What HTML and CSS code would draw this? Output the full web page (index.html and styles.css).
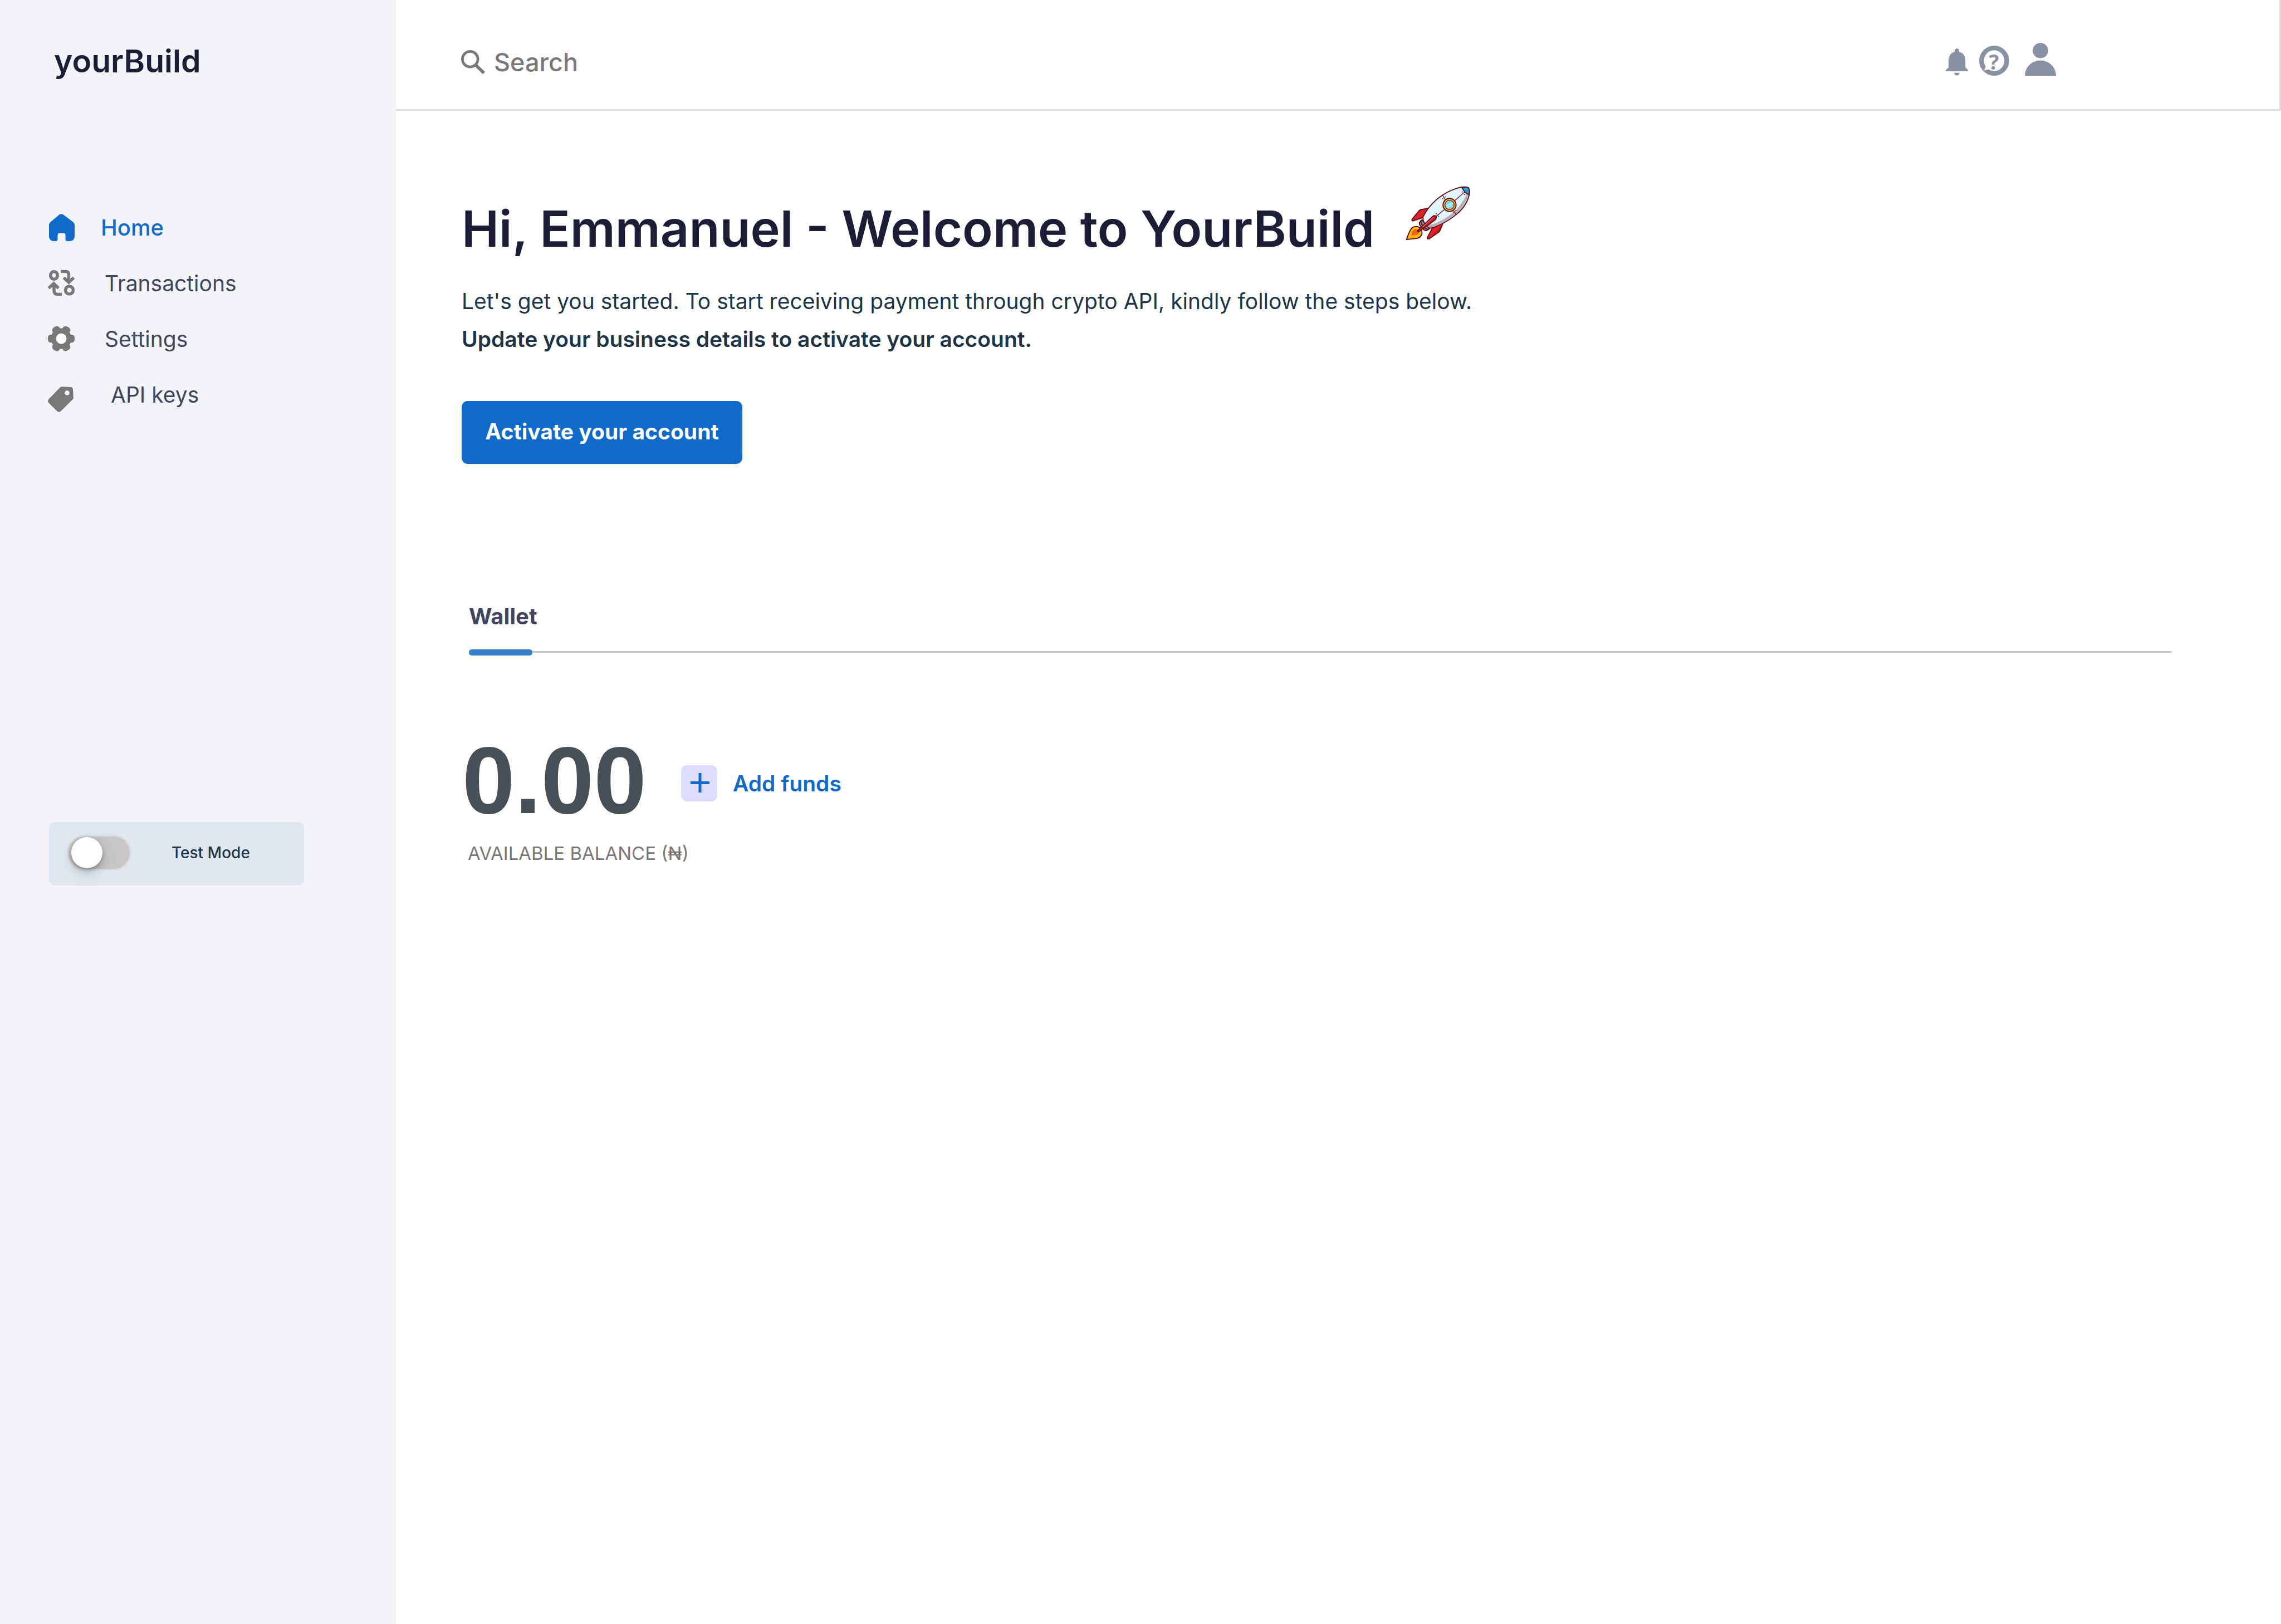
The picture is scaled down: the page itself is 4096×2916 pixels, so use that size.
FILE: index.html
```
<!DOCTYPE html>
<html lang="en">
<head>
<meta charset="utf-8">
<meta name="viewport" content="width=device-width, initial-scale=1">
<title>yourBuild</title>
<link rel="stylesheet" href="styles.css">
</head>
<body>
<div class="app">
  <aside class="sidebar">
    <a class="brand" href="#">yourBuild</a>
    <nav class="nav" aria-label="Main">
      <a class="nav-link nav-link-home" href="#" aria-current="page">
        <svg class="nav-icon" viewBox="0 0 48 48" aria-hidden="true"><path fill="currentColor" d="M20.600 1.200Q24 -.8 27.400 1.200L45 14.500Q48 17 48 19.500V41Q47 48.500 40 49H34Q31.500 48.500 31.500 46V38Q31.500 34.500 28 34.500H21Q17.500 34.500 17.500 38V46Q17.500 48.500 15 49H10Q3 48.500 2 41V19.500Q2 17 5 14.500Z"/></svg>
        <span>Home</span>
      </a>
      <a class="nav-link" href="#">
        <svg class="nav-icon" viewBox="0 0 48 48" aria-hidden="true"><g fill="none" stroke="currentColor" stroke-width="5.500"><ellipse cx="11" cy="10.500" rx="6.300" ry="7"/><ellipse cx="38.500" cy="37" rx="7" ry="7"/><path d="M23 3.500H32Q37.500 3.500 37.500 9V21M28.500 14.500L37.500 23L46.500 14.500M25 44.500H17.500Q11 44.500 11 37.500V26.500M1.500 33.500L10.500 25L19 33.500"/></g></svg>
        <span>Transactions</span>
      </a>
      <a class="nav-link" href="#">
        <svg class="nav-icon" viewBox="0 0 48 48" aria-hidden="true"><g fill="currentColor"><circle cx="24" cy="24" r="18.500"/><rect x="0" y="16.700" width="48" height="14.600" rx="5.500"/><rect x="0" y="16.700" width="48" height="14.600" rx="5.500" transform="rotate(60 24 24)"/><rect x="0" y="16.700" width="48" height="14.600" rx="5.500" transform="rotate(120 24 24)"/></g><circle cx="24" cy="24" r="9.500" fill="#fefefe"/></svg>
        <span>Settings</span>
      </a>
      <a class="nav-link nav-link-keys" href="#">
        <svg class="nav-icon nav-icon-tag" viewBox="0 0 48 66" aria-hidden="true"><path fill="currentColor" d="M22 20.500Q23.500 19.200 25.500 19.300L41 20Q44.700 20.300 45 24L45.800 39Q45.800 41 44.500 42.300L23 63.500Q19.800 66 16.800 63.500L1.200 48.200Q-1.200 45 1.200 42Z"/><circle cx="34.500" cy="30.500" r="4.300" fill="#fefefe"/></svg>
        <span>API keys</span>
      </a>
    </nav>
    <label class="mode">
      <input class="mode-switch" type="checkbox" role="switch">
      <span>Test Mode</span>
    </label>
  </aside>

  <div class="page">
    <header class="topbar">
      <label class="search">
        <svg class="search-icon" viewBox="0 0 45 45" aria-hidden="true"><g fill="none" stroke="currentColor" stroke-width="5"><circle cx="17" cy="17" r="14.500"/><path stroke-width="6" d="M28 28.500L43 43"/></g></svg>
        <input class="search-input" type="search" placeholder="Search" aria-label="Search">
      </label>
      <div class="tools">
        <button class="tool tool-bell" type="button" aria-label="Notifications">
          <svg viewBox="0 0 126 154" aria-hidden="true"><path fill="currentColor" d="M51 18V12Q52 1 63 0Q74 1 75 12V18Q110 28 111 65V107L126 122V129H0V122L16 107V65Q17 28 51 18ZM48 138H78Q76 153 63 153Q50 153 48 138Z"/></svg>
        </button>
        <button class="tool tool-help" type="button" aria-label="Help">
          <svg viewBox="0 0 168 168" aria-hidden="true"><circle cx="84" cy="84" r="84" fill="currentColor"/><path fill="#fefefe" d="M84 26A58 58 0 1 1 52 133L28 138Q33 128 36 116A58 58 0 0 1 84 26Z"/><text class="help-mark" x="82" y="134" text-anchor="middle" fill="currentColor">?</text></svg>
        </button>
        <button class="tool tool-user" type="button" aria-label="Account">
          <svg viewBox="0 0 174 184" aria-hidden="true"><circle cx="87" cy="43" r="43" fill="currentColor"/><path fill="currentColor" d="M0 184C0 136 39 98 87 98S174 136 174 184Z"/></svg>
        </button>
      </div>
    </header>

    <main>
      <section class="hero">
        <div class="hero-head">
          <h1 class="hero-title">Hi, Emmanuel - Welcome to YourBuild</h1>
          <svg class="rocket" viewBox="74 66 366 309" aria-hidden="true">
            <g stroke="#5c0c14" stroke-width="6" stroke-linejoin="round" stroke-linecap="round">
              <path fill="#fdb813" d="M79 369Q92 330 106 308Q122 290 146 297Q169 308 167 335Q162 358 138 363Q110 365 79 369Z"/>
              <path fill="#f0620f" stroke="none" d="M107 348Q108 322 122 312Q138 306 152 320Q152 336 138 343Q122 345 107 348Z"/>
              <path fill="#e0202a" d="M213 190L160 200Q152 203 146 211L110 256Q108 264 118 263L178 243Z"/>
              <path fill="#b3121d" stroke="none" d="M196 214L178 240L130 256L172 240Z"/>
              <path fill="#e0202a" d="M232 292L197 358Q197 368 208 365L262 327Q268 321 271 314L286 276Z"/>
              <path fill="#b3121d" stroke="none" d="M282 282L268 314L208 360L254 318Z"/>
              <path fill="#9a9298" d="M166 257L153 272Q150 282 158 292L180 316Q190 322 198 316L212 304Z"/>
              <path fill="none" d="M160 264Q164 286 178 300T206 310"/>
              <path fill="#e2f3fc" d="M172 243Q196 190 250 142Q310 92 380 74Q415 68 430 76Q440 90 434 118Q418 182 360 228Q310 270 244 296Q222 306 208 304Q172 280 172 243Z"/>
              <path fill="#b9adb8" stroke="none" d="M210 300Q192 288 183 270Q206 292 244 277Q330 240 378 180Q410 140 420 112L431 112Q414 178 358 225Q310 266 244 292Q222 302 210 300Z"/>
              <path fill="#1d9ce0" d="M393 74Q420 68 430 76Q440 90 433 114Q410 108 393 74Z"/>
              <path fill="none" stroke-width="4" d="M284 119L299 143M346 207L361 228M354 147L408 101M247 238L292 201"/>
              <path fill="#d01c28" d="M141 320L228 238Q240 229 247 240Q250 250 240 259L150 324Q142 327 141 320Z"/>
              <path stroke="#ee6a70" stroke-width="4" d="M170 298L232 243"/>
              <circle cx="323" cy="173" r="37" fill="#f9b915"/>
              <circle cx="323" cy="173" r="26" fill="#7fdbe8" stroke-width="4"/>
              <path stroke="#c6f2f6" stroke-width="6" d="M308 176L340 164M312 186L334 178"/>
            </g>
            <g fill="#5c0c14"><circle cx="301" cy="127" r="3"/><circle cx="285" cy="138" r="3"/><circle cx="395" cy="100" r="3"/><circle cx="408" cy="113" r="3"/><circle cx="248" cy="223" r="3"/><circle cx="261" cy="237" r="3"/><circle cx="344" cy="217" r="3"/><circle cx="359" cy="205" r="3"/></g>
          </svg>
        </div>
        <div class="hero-text">
          <p>Let's get you started. To start receiving payment through crypto API, kindly follow the steps below.</p>
          <p class="hero-strong">Update your business details to activate your account.</p>
        </div>
        <button class="primary" type="button">Activate your account</button>
      </section>

      <div class="tabs" role="tablist">
        <button class="tab" type="button" role="tab" aria-selected="true">Wallet</button>
      </div>

      <section class="balance">
        <div class="balance-row">
          <span class="amount">0.00</span>
          <button class="add" type="button">
            <svg class="add-icon" viewBox="0 0 65 65" aria-hidden="true"><rect width="65" height="65" rx="11" fill="#dcdcfc"/><path d="M34 14V49M17 31.500H51" stroke="currentColor" stroke-width="5"/></svg>
            <span>Add funds</span>
          </button>
        </div>
        <p class="caption">AVAILABLE BALANCE (₦)</p>
      </section>
    </main>
  </div>
</div>
</body>
</html>
```
FILE: styles.css
```
* {
  box-sizing: border-box;
}

body {
  margin: 0;
  background: #fefefe;
  color: #1d3447;
  font-family: Inter, "Liberation Sans", sans-serif;
  font-size: 39px;
}

h1,
p {
  margin: 0;
}

a {
  color: inherit;
  text-decoration: none;
}

button {
  padding: 0;
  border: 0;
  background: none;
  color: inherit;
  font: inherit;
  cursor: pointer;
}

svg {
  display: block;
}

.app {
  display: flex;
  min-height: 100vh;
}

/* Sidebar */

.sidebar {
  flex: 0 0 711px;
  padding: 76px 86px;
  background: #f2f4f8;
}

.brand {
  display: block;
  margin-left: 11px;
  color: #1b1e35;
  font-size: 57px;
  font-weight: 600;
  line-height: 68px;
}

.nav {
  margin-top: 214px;
}

.nav-link {
  display: flex;
  align-items: center;
  gap: 54px;
  height: 100px;
  color: #40455d;
}

.nav-link-home {
  gap: 47px;
  color: #106aca;
  font-size: 40px;
  font-weight: 500;
}

.nav-link-keys {
  gap: 65px;
}

.nav-icon {
  width: 48px;
  height: 48px;
  overflow: visible;
  color: #787878;
}

.nav-link-home .nav-icon {
  color: inherit;
}

.nav-icon-tag {
  height: 66px;
}

.mode {
  display: flex;
  align-items: center;
  gap: 72px;
  width: 458px;
  margin: 718px 0 0 2px;
  padding: 23px 32px 27px;
  border-radius: 11px;
  background: #e0e7f1;
  font-size: 28px;
  font-weight: 500;
}

.mode-switch {
  appearance: none;
  width: 116px;
  height: 64px;
  margin: 0;
  padding: 1px 5px;
  border: 3px solid #dcdcdc;
  border-radius: 32px;
  background: #c6c6c6;
}

.mode-switch::before {
  content: "";
  display: block;
  width: 56px;
  height: 56px;
  border-radius: 50%;
  background: #fff;
  box-shadow: 0 10px 20px rgba(0, 0, 0, 0.15), 0 3px 8px rgba(0, 0, 0, 0.25);
}

.mode-switch:checked::before {
  margin-left: auto;
}

/* Top bar */

.page {
  flex: 1;
  min-width: 0;
}

.topbar {
  display: flex;
  align-items: center;
  justify-content: space-between;
  height: 199px;
  padding: 27px 401px 0 117px;
  border-right: 3px solid #dadae0;
  border-bottom: 3px solid #dadae0;
}

.search {
  display: flex;
  align-items: center;
  gap: 16px;
  color: #787878;
}

.search-icon {
  width: 43px;
  height: 43px;
}

.search-input {
  width: 900px;
  padding: 0;
  border: 0;
  outline: 0;
  background: none;
  color: inherit;
  font: 500 45px/56px Inter, "Liberation Sans", sans-serif;
}

.search-input::placeholder {
  color: inherit;
  opacity: 1;
}

.tools {
  display: flex;
  align-items: flex-end;
  gap: 20px;
  padding-bottom: 10px;
  color: #8892a3;
}

.tool svg {
  width: 100%;
}

.tool-bell {
  width: 40px;
}

.tool-help {
  width: 54px;
}

.tool-user {
  width: 56px;
  margin-left: 8px;
}

.help-mark {
  font: 700 116px "Noto Sans", sans-serif;
}

/* Welcome */

.hero {
  padding: 135px 118px 0;
}

.hero-head {
  display: flex;
  gap: 56px;
  min-height: 131px;
}

.hero-title {
  align-self: flex-end;
  color: #1b1e35;
  font-size: 90px;
  font-weight: 600;
  line-height: 108px;
}

.rocket {
  width: 116px;
  height: 98px;
}

.hero-text {
  margin-top: 42px;
  line-height: 68px;
}

.hero-strong {
  font-weight: 600;
}

.primary {
  width: 504px;
  height: 113px;
  margin-top: 77px;
  padding-bottom: 4px;
  border-radius: 11px;
  background: #106aca;
  color: #fff;
  font-weight: 700;
}

/* Wallet */

.tabs {
  height: 89px;
  margin: 250px 196px 0 131px;
  border-bottom: 3px solid #c6c6c6;
}

.tab {
  position: relative;
  display: block;
  height: 86px;
  padding-bottom: 38px;
  color: #40455d;
  font-size: 40px;
  font-weight: 700;
  line-height: 48px;
}

.tab::after {
  content: "";
  position: absolute;
  bottom: -8px;
  left: 0;
  width: 114px;
  height: 11px;
  border-radius: 5px;
  background: #3680cb;
}

.balance {
  padding: 144px 119px;
}

.balance-row {
  display: flex;
  align-items: center;
  gap: 62px;
}

.amount {
  color: #485057;
  font: 700 170px/170px "Liberation Sans", sans-serif;
}

.add {
  display: flex;
  align-items: center;
  gap: 28px;
  padding-top: 10px;
  color: #106aca;
  font-weight: 600;
}

.add-icon {
  width: 65px;
  height: 65px;
}

.caption {
  margin: 26px 0 0 10px;
  color: #787878;
  font-size: 33px;
  line-height: 40px;
}
```
